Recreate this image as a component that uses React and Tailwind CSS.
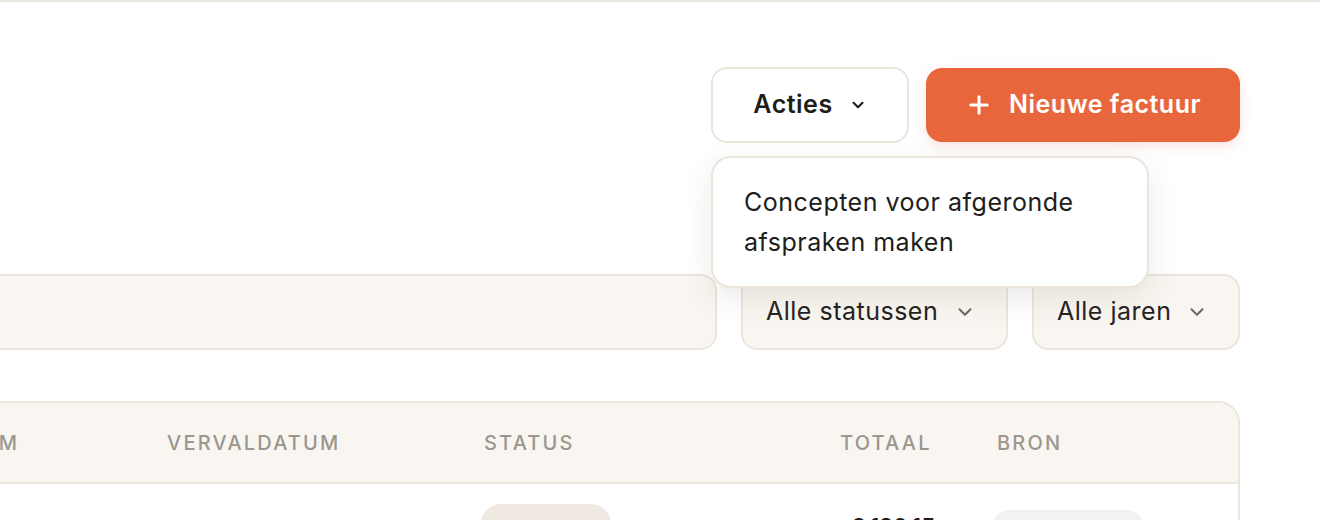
import { ChevronDown, Plus } from 'lucide-react';

const font = { fontFamily: 'Inter, "Noto Sans", sans-serif' };

function FilterSelect({ label, width }) {
  return (
    <button
      className={`h-[76px] ${width} flex items-center justify-between pl-[23px] pr-[30px] rounded-[16px] border-2 border-[#ebe5dc] bg-[#f9f6f1] text-[25px] tracking-[0.02em] text-[#27231f]`}
    >
      <span>{label}</span>
      <ChevronDown size={22} strokeWidth={2.2} className="text-[#6d675f]" />
    </button>
  );
}

export default function App() {
  return (
    <div className="w-[1320px] h-[520px] overflow-hidden bg-white border-t-2 border-[#ece7e1]" style={font}>
      <div className="ml-[-360px] w-[1600px]">
        {/* page actions */}
        <div className="pt-[65px] flex justify-end items-center gap-[17px]">
          <div className="relative">
            <button className="h-[76px] w-[198px] flex items-center justify-center gap-[16px] rounded-[16px] border-2 border-[#ebe5dc] bg-white text-[25px] tracking-[0.02em] font-semibold text-[#1f1d1a]">
              <span>Acties</span>
              <ChevronDown size={18} strokeWidth={2.8} />
            </button>
            <div className="absolute left-0 top-[89px] z-10 w-[438px] rounded-[20px] border-2 border-[#ebe5dc] bg-white px-[31px] py-[24px] shadow-[0_10px_30px_rgba(60,45,30,0.10)]">
              <p className="text-[25px] tracking-[0.02em] leading-[40px] text-[#201d1a]">
                Concepten voor afgeronde afspraken maken
              </p>
            </div>
          </div>
          <button className="h-[74px] w-[314px] flex items-center justify-center gap-[16px] rounded-[16px] bg-[#e8663c] text-[25px] tracking-[0.02em] font-semibold text-white shadow-[0_4px_12px_rgba(232,102,60,0.18)]">
            <Plus size={28} strokeWidth={2.6} />
            <span>Nieuwe factuur</span>
          </button>
        </div>

        {/* filters */}
        <div className="mt-[131px] flex gap-[24px]">
          <div className="h-[76px] flex-1 rounded-[16px] border-2 border-[#ebe5dc] bg-[#f9f6f1]" />
          <FilterSelect label="Alle statussen" width="w-[267px]" />
          <FilterSelect label="Alle jaren" width="w-[208px]" />
        </div>

        {/* table */}
        <div className="mt-[51px] rounded-[22px] border-2 border-[#ebe5dc] overflow-hidden">
          <div className="h-[81px] flex items-center bg-[#f9f6f1] border-b-2 border-[#ebe5dc] pl-[32px] text-[20px] font-medium uppercase tracking-[0.11em] text-[#9b968f]">
            <div className="w-[262px]">Klant</div>
            <div className="w-[231px]">Datum</div>
            <div className="w-[317px]">Vervaldatum</div>
            <div className="w-[356px]">Status</div>
            <div className="w-[91px] text-right">Totaal</div>
            <div className="w-[66px]" />
            <div className="flex-1">Bron</div>
          </div>
          <div className="h-[100px] flex items-start pt-[20px] pl-[32px]">
            <div className="w-[262px]" />
            <div className="w-[231px]" />
            <div className="w-[317px]" />
            <div className="w-[356px]">
              <div className="ml-[-3px] h-[40px] w-[130px] rounded-full bg-[#efe9e2]" />
            </div>
            <div className="w-[95px] pt-[6px] text-right text-[22px] font-semibold text-[#1f1d1a]">€ 120,15</div>
            <div className="w-[58px]" />
            <div className="flex-1 pt-[6px]">
              <div className="h-[32px] w-[150px] rounded-full bg-[#f3f2f0]" />
            </div>
          </div>
        </div>
      </div>
    </div>
  );
}
